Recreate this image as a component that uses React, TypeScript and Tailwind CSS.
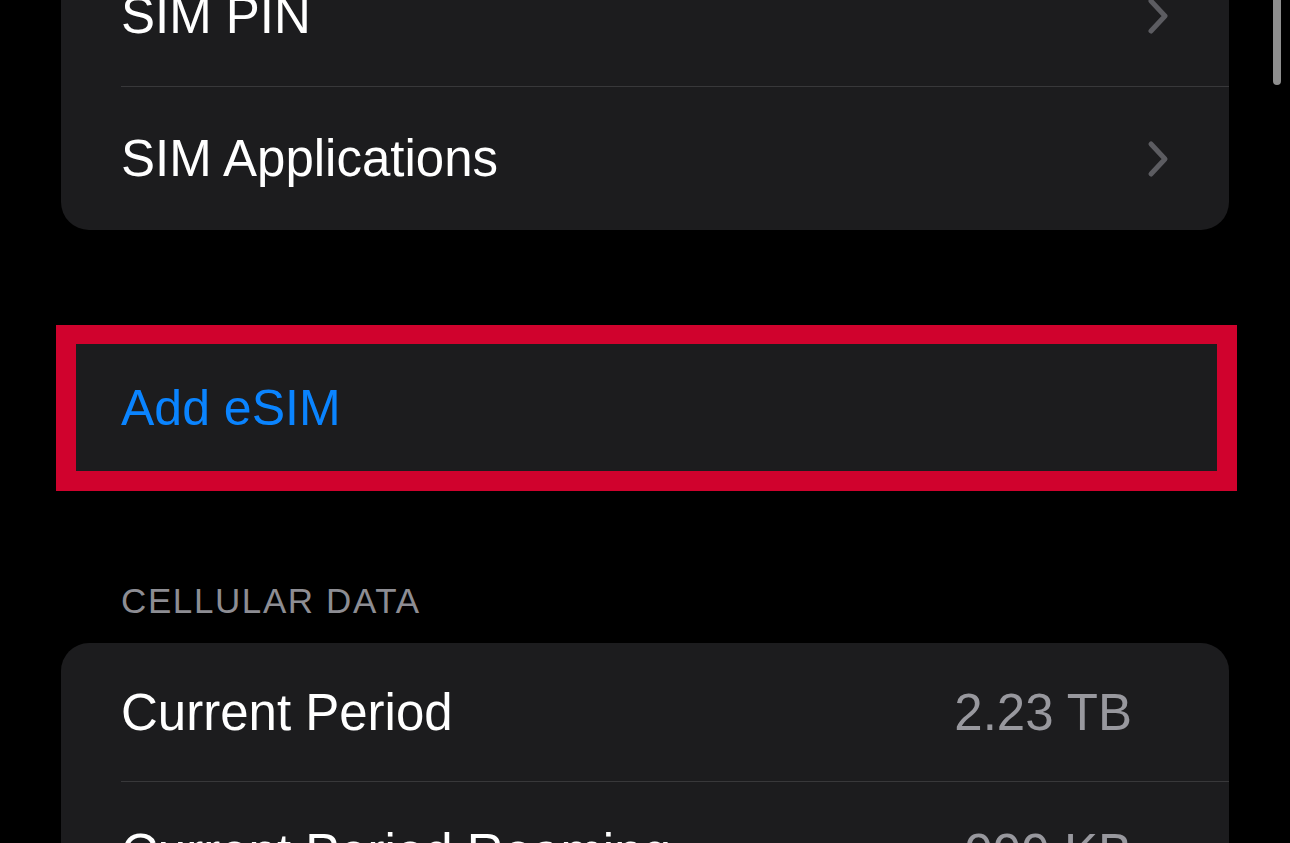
import React from "react";

function Chevron() {
	return (
		<svg width="22" height="38" viewBox="0 0 22 38" fill="none" className="shrink-0">
			<polyline
				points="4,4 18,19 4,34"
				stroke="#5c5c61"
				strokeWidth="5"
				strokeLinecap="round"
				strokeLinejoin="round"
			/>
		</svg>
	);
}

function Row({
	label,
	value,
	chevron,
	last,
	height,
}: {
	label: string;
	value?: string;
	chevron?: boolean;
	last?: boolean;
	height: string;
}) {
	return (
		<div className="pl-[60px]">
			<div
				className={`flex items-center justify-between ${height} ${
					last ? "" : "border-b border-[#38383a]"
				} ${chevron ? "pr-[60px]" : "pr-[97px]"}`}
			>
				<span className="text-white">{label}</span>
				{value && <span className="text-[#98989e]">{value}</span>}
				{chevron && <Chevron />}
			</div>
		</div>
	);
}

export default function App() {
	return (
		<div
			className="relative h-[843px] w-[1290px] overflow-hidden bg-black text-[51px] leading-none"
			style={{ fontFamily: '"Liberation Sans", Arial, sans-serif' }}
		>
			<div className="px-[61px]">
				{/* SIM card */}
				<div className="-mt-[55px] overflow-hidden rounded-[28px] bg-[#1c1c1e]">
					<Row label="SIM PIN" chevron height="h-[142px]" />
					<Row label="SIM Applications" chevron last height="h-[143px]" />
				</div>

				{/* highlighted Add eSIM */}
				<div className="-ml-[5px] -mr-[8px] mt-[95px] flex h-[166px] items-center border-[20px] border-t-[19px] border-[#d0022d] bg-[#1c1c1e] pl-[45px]">
					<span className="text-[50px] text-[#0a84ff]">Add eSIM</span>
				</div>

				{/* section header */}
				<div className="flex h-[152px] items-center pl-[60px] pt-[66px]">
					<span className="text-[35px] tracking-[1.6px] text-[#8d8d93]">CELLULAR DATA</span>
				</div>

				{/* cellular data card */}
				<div className="overflow-hidden rounded-[28px] bg-[#1c1c1e]">
					<Row label="Current Period" value="2.23 TB" height="h-[139px]" />
					<Row label="Current Period Roaming" value="999 KB" last height="h-[140px]" />
				</div>
			</div>

			{/* scroll indicator */}
			<div className="absolute right-[9px] top-[-10px] h-[95px] w-[8px] rounded-full bg-[#8e8e8e]" />
		</div>
	);
}
